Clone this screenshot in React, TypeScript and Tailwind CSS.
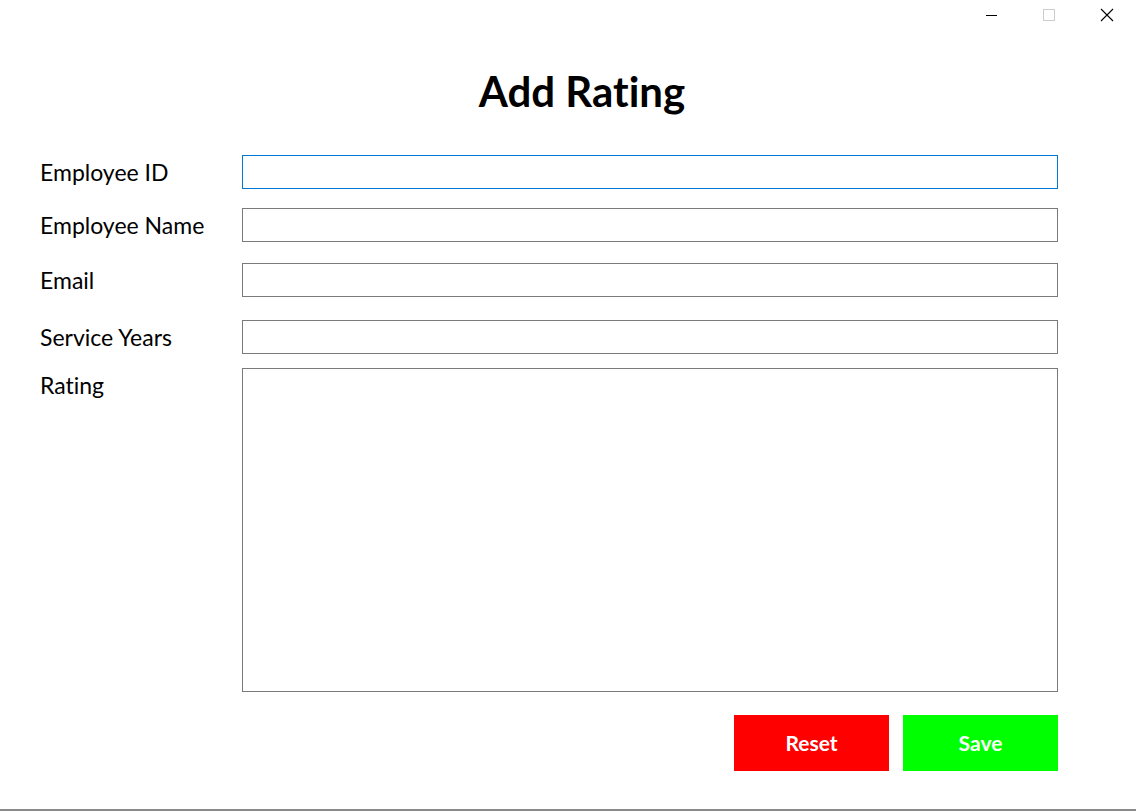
import React from "react";

const font = { fontFamily: "Lato, 'Noto Sans', sans-serif" };

function Row({ label, mt, children, alignTop = false }: { label: string; mt: string; children: React.ReactNode; alignTop?: boolean }) {
  return (
    <div className={`flex ${alignTop ? "items-start" : "items-center"} ${mt}`}>
      <div className={`w-[202px] shrink-0 text-[23px] text-black leading-[28px] ${alignTop ? "pt-[3px]" : ""}`}>{label}</div>
      {children}
    </div>
  );
}

export default function App() {
  return (
    <div className="w-[1136px] h-[811px] bg-white flex flex-col border-b-2 border-[#8a8a8a] overflow-hidden [font-variant-ligatures:none]" style={font}>
      <div className="flex justify-end h-[30px] items-start">
        <div className="w-[58px] h-[30px] flex items-center justify-center">
          <svg width="12" height="12" viewBox="0 0 12 12"><line x1="1" y1="6.5" x2="12" y2="6.5" stroke="#000" strokeWidth="1" /></svg>
        </div>
        <div className="w-[58px] h-[30px] flex items-center justify-center">
          <svg width="12" height="12" viewBox="0 0 12 12"><rect x="0.5" y="0.5" width="11" height="11" fill="none" stroke="#cccccc" strokeWidth="1" /></svg>
        </div>
        <div className="w-[58px] h-[30px] flex items-center justify-center">
          <svg width="14" height="14" viewBox="0 0 14 14"><path d="M1 1 L13 13 M13 1 L1 13" stroke="#000" strokeWidth="1.1" /></svg>
        </div>
      </div>
      <div className="mt-[36px] h-[50px] flex justify-center pl-[28px]">
        <h1 className="text-[42px] font-bold leading-[50px] text-black">Add Rating</h1>
      </div>
      <div className="pl-[40px] pr-[78px] mt-[39px] flex flex-col">
        <Row label="Employee ID" mt="mt-0">
          <input className="flex-1 h-[34px] border border-[#0078d7] outline-none px-2 text-[16px]" />
        </Row>
        <Row label="Employee Name" mt="mt-[19px]">
          <input className="flex-1 h-[34px] border border-[#7a7a7a] outline-none px-2 text-[16px]" />
        </Row>
        <Row label="Email" mt="mt-[21px]">
          <input className="flex-1 h-[34px] border border-[#7a7a7a] outline-none px-2 text-[16px]" />
        </Row>
        <Row label="Service Years" mt="mt-[23px]">
          <input className="flex-1 h-[34px] border border-[#7a7a7a] outline-none px-2 text-[16px]" />
        </Row>
        <Row label="Rating" mt="mt-[14px]" alignTop>
          <textarea className="flex-1 h-[324px] border border-[#7a7a7a] outline-none resize-none p-2 text-[16px]" />
        </Row>
        <div className="flex justify-end gap-[14px] mt-[23px]">
          <button className="w-[155px] h-[56px] bg-[#ff0000] text-white font-bold text-[21px]">Reset</button>
          <button className="w-[155px] h-[56px] bg-[#00ff00] text-white font-bold text-[21px]">Save</button>
        </div>
      </div>
    </div>
  );
}
